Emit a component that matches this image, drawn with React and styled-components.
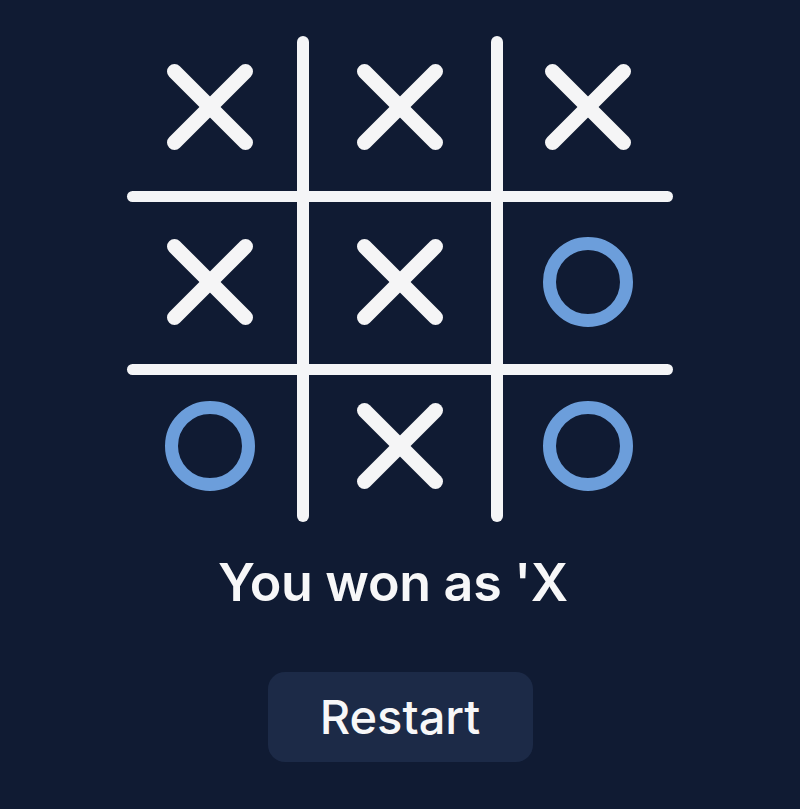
import React from "react";
import styled, { createGlobalStyle } from "styled-components";

const Global = createGlobalStyle`
  html, body { margin: 0; padding: 0; background: #101b33; }
  body { font-family: Inter, "Noto Sans", "Liberation Sans", sans-serif; }
`;

const Page = styled.main`
  width: 800px;
  height: 809px;
  background: #101b33;
  display: flex;
  flex-direction: column;
  align-items: center;
  padding-top: 36px;
  box-sizing: border-box;
`;

const Board = styled.div`
  display: grid;
  grid-template-columns: 170px 12px 182px 12px 170px;
  grid-template-rows: 155px 11px 162px 11px 147px;
  width: 546px;
`;

const VLine = styled.div`
  grid-row: 1 / -1;
  grid-column: ${(p) => p.$col};
  background: #f4f5f7;
  border-radius: 6px;
`;

const HLine = styled.div`
  grid-column: 1 / -1;
  grid-row: ${(p) => p.$row};
  background: #f4f5f7;
  border-radius: 6px;
`;

const Cell = styled.div`
  grid-row: ${(p) => p.$row};
  grid-column: ${(p) => p.$col};
  display: flex;
  align-items: center;
  justify-content: center;
  padding-bottom: ${(p) => p.$lift}px;
  padding-right: ${(p) => p.$nudge}px;
`;

const Title = styled.h1`
  margin: 34px 0 0;
  padding-right: 14px;
  font-size: 52px;
  line-height: 54px;
  font-weight: 600;
  color: #f7f7f8;
  letter-spacing: -0.3px;
`;

const RestartButton = styled.button`
  margin-top: 62px;
  width: 265px;
  height: 90px;
  border: none;
  border-radius: 17px;
  background: #1c2a47;
  color: #f7f7f8;
  font-family: inherit;
  font-size: 47px;
  font-weight: 500;
  display: flex;
  align-items: center;
  justify-content: center;
  padding: 0 0 2px;
  cursor: pointer;
`;

const XMark = () => (
  <svg width="86" height="86" viewBox="0 0 86 86">
    <g stroke="#f5f5f6" strokeWidth="15" strokeLinecap="round">
      <line x1="7.5" y1="7.5" x2="78.5" y2="78.5" />
      <line x1="78.5" y1="7.5" x2="7.5" y2="78.5" />
    </g>
  </svg>
);

const OMark = () => (
  <svg width="90" height="90" viewBox="0 0 90 90">
    <circle cx="45" cy="45" r="38.5" fill="none" stroke="#6c9edb" strokeWidth="13" />
  </svg>
);

const board = [
  ["X", "X", "X"],
  ["X", "X", "O"],
  ["O", "X", "O"],
];

const rowLift = [14, 3, 6];
const colNudge = [4, 0, -8];

export default function App() {
  return (
    <>
      <Global />
      <Page>
        <Board>
          {board.map((row, r) =>
            row.map((v, c) => (
              <Cell
                key={`${r}-${c}`}
                $row={r * 2 + 1}
                $col={c * 2 + 1}
                $lift={rowLift[r]}
                $nudge={colNudge[c]}
              >
                {v === "X" ? <XMark /> : <OMark />}
              </Cell>
            ))
          )}
          <VLine $col={2} />
          <VLine $col={4} />
          <HLine $row={2} />
          <HLine $row={4} />
        </Board>
        <Title>You won as 'X</Title>
        <RestartButton>Restart</RestartButton>
      </Page>
    </>
  );
}
